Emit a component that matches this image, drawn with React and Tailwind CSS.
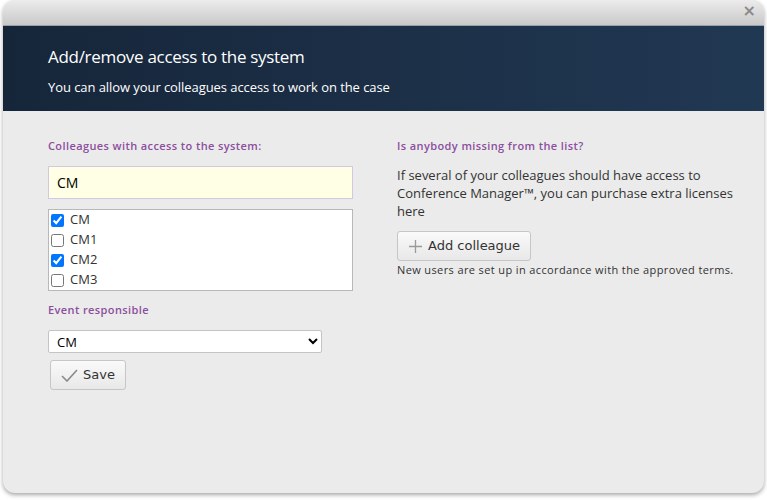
import React from "react";

const people = [
  { name: "CM", checked: true },
  { name: "CM1", checked: false },
  { name: "CM2", checked: true },
  { name: "CM3", checked: false },
];

const body = { fontFamily: '"Open Sans", "Noto Sans", sans-serif' };
const narrow = { fontFamily: '"Open Sans", sans-serif' };
const verdana = { fontFamily: '"DejaVu Sans", sans-serif' };

const App = () => {
  return (
    <div className="w-[767px] h-[500px] bg-white pt-0 px-[3px]">
      <div className="h-[493px] rounded-[12px] bg-[#ebebeb] shadow-[0_2px_4px_rgba(0,0,0,0.35)] overflow-hidden flex flex-col" style={body}>
        <div className="h-[26px] shrink-0 bg-gradient-to-b from-[#ececec] to-[#c9c9c9] border-b border-[#9aa0a6] flex justify-end items-start pr-[8px] pt-[2px]">
          <span className="text-[#8a8a8a] text-[16px] font-bold leading-[18px]" style={verdana}>×</span>
        </div>
        <div className="h-[85px] shrink-0 bg-gradient-to-r from-[#16263a] to-[#213853] pl-[45px] pt-[19px] text-white">
          <h1 className="text-[17px] leading-[24px] tracking-[-0.3px]" style={narrow}>Add/remove access to the system</h1>
          <p className="text-[13px] leading-[18px] mt-[9px] tracking-[-0.07px]" style={narrow}>You can allow your colleagues access to work on the case</p>
        </div>
        <div className="flex pl-[45px] pt-[28px]">
          <div className="w-[305px]">
            <div className="text-[11px] font-semibold text-[#8b4f9e] leading-[14px] tracking-[0.4px]">Colleagues with access to the system:</div>
            <input
              className="mt-[13px] w-[305px] h-[33px] bg-[#ffffe6] border border-[#d6c6df] px-[8px] text-[14px] text-black outline-none"
              defaultValue="CM"
            />
            <div className="mt-[10px] bg-white border border-[#b8b8b8] h-[82px] pl-[1px]">
              {people.map((p) => (
                <label key={p.name} className="flex items-center h-[20px] text-[13px] text-[#333]">
                  <input type="checkbox" defaultChecked={p.checked} className="w-[13px] h-[13px] m-0 mr-[6px] ml-[1px] accent-[#0075ff]" />
                  {p.name}
                </label>
              ))}
            </div>
            <div className="mt-[12px] text-[11px] font-semibold text-[#8b4f9e] leading-[14px] tracking-[0.4px]">Event responsible</div>
            <select className="mt-[13px] w-[274px] h-[23px] bg-white border border-[#c4c4c4] rounded-[2px] px-[4px] text-[13px] text-black" defaultValue="CM">
              <option>CM</option>
              <option>CM1</option>
              <option>CM2</option>
              <option>CM3</option>
            </select>
            <button className="mt-[7px] ml-[2px] h-[30px] px-[10px] flex items-center gap-[5px] bg-gradient-to-b from-[#fafafa] to-[#e8e8e8] border border-[#c6c6c6] rounded-[3px] text-[13px] text-[#333]" style={verdana}>
              <svg width="17" height="13" viewBox="0 0 17 13" fill="none">
                <path d="M1 7 L6 12 L16 1" stroke="#8a8a8a" strokeWidth="1.6" />
              </svg>
              Save
            </button>
          </div>
          <div className="ml-[44px] w-[350px]">
            <div className="text-[11px] font-semibold text-[#8b4f9e] leading-[14px] tracking-[0.4px]">Is anybody missing from the list?</div>
            <p className="mt-[13px] text-[13px] leading-[18px] text-[#333]">
              If several of your colleagues should have access to Conference Manager™, you can purchase extra licenses here
            </p>
            <button className="mt-[11px] h-[30px] px-[10px] flex items-center gap-[5px] bg-gradient-to-b from-[#fafafa] to-[#e8e8e8] border border-[#c6c6c6] rounded-[3px] text-[13px] text-[#333]" style={verdana}>
              <svg width="15" height="15" viewBox="0 0 15 15" fill="none">
                <path d="M7.5 1 V14 M1 7.5 H14" stroke="#9a9a9a" strokeWidth="1.3" />
              </svg>
              Add colleague
            </button>
            <p className="mt-[2px] text-[11px] leading-[14px] text-[#333] tracking-[0.38px]">New users are set up in accordance with the approved terms.</p>
          </div>
        </div>
      </div>
    </div>
  );
};

export default App;
